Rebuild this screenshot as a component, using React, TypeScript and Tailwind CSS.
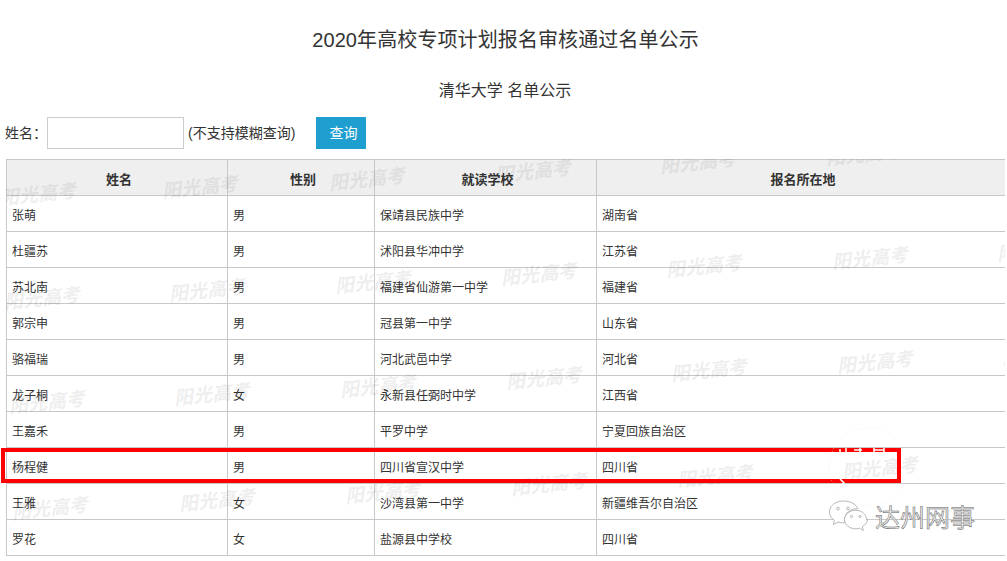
const font = '"Liberation Sans", "Noto Sans CJK SC", sans-serif';

const rows = [
  ['张萌', '男', '保靖县民族中学', '湖南省'],
  ['杜疆苏', '男', '沭阳县华冲中学', '江苏省'],
  ['苏北南', '男', '福建省仙游第一中学', '福建省'],
  ['郭宗申', '男', '冠县第一中学', '山东省'],
  ['骆福瑞', '男', '河北武邑中学', '河北省'],
  ['龙子桐', '女', '永新县任弼时中学', '江西省'],
  ['王嘉禾', '男', '平罗中学', '宁夏回族自治区'],
  ['杨程健', '男', '四川省宣汉中学', '四川省'],
  ['王雅', '女', '沙湾县第一中学', '新疆维吾尔自治区'],
  ['罗花', '女', '盐源县中学校', '四川省'],
];

// watermark origins inside the table box, the site tiles this as a table background
const marks = [
  [-6, 24], [156, 17], [323, 9], [489, 1], [654, -8], [820, -16], [985, -24],
  [-2, 128], [163, 120], [329, 112], [495, 104], [660, 96], [826, 88], [991, 80],
  [3, 232], [168, 224], [334, 216], [500, 208], [665, 200], [831, 192], [996, 184],
  [6, 338], [173, 330], [339, 322], [505, 314], [671, 306], [836, 298],
];

function WechatLogo() {
  return (
    <svg width="40" height="36" viewBox="0 0 40 36" fill="#fff" stroke="#999" strokeWidth="0.7">
      <path d="M15 1C7.5 1 1.500 5.800 1.500 12c0 3.400 1.900 6.300 4.800 8.300L5.300 24.500l4.700-2.500c1.700.5 3.300.8 5 .8 1 0 1.500 0 2.500-.2-.5-1.300-.7-2.300-.7-3.600 0-5.700 5.300-10.200 12-10.200h1C28.300 4 22.200 1 15 1z" />
      <path d="M38.500 19.500c0-5.200-5-9.200-10.800-9.200-6 0-11.200 4-11.200 9.200 0 5.300 5.200 9.300 11.200 9.300 1.300 0 2.500-.3 3.800-.6l3.800 2.300-1-3.700c3-2 5.200-4.800 5.200-7.300z" />
      <circle cx="10" cy="8.500" r="1.400" />
      <circle cx="20" cy="8.500" r="1.400" />
      <circle cx="23.500" cy="16.500" r="1.100" />
      <circle cx="32" cy="16.500" r="1.100" />
    </svg>
  );
}

// the pale round stamp that the account logo leaves over the red box
function Stamp() {
  return (
    <svg className="absolute left-[826px] top-[425px] pointer-events-none" width="84" height="84" viewBox="0 0 84 84" fill="none" stroke="#fff">
      <circle cx="42" cy="42" r="39" stroke="#e9e9e9" strokeWidth="0.6" strokeDasharray="1 2" />
      <path d="M14 24v4M20 23v5M28 25h8M34 23v5M48 23v5M48 25h10M58 23v5" strokeWidth="1.500" />
      <path d="M14 54l4 4-4 3" strokeWidth="1.500" />
    </svg>
  );
}

export default function App() {
  return (
    <div className="relative w-[1007px] h-[561px] overflow-hidden bg-white text-[#333]" style={{ fontFamily: font }}>
      <h1 className="pt-[27px] pl-[4px] h-[75px] text-center text-[20px] leading-[26px] tracking-[0.1px] font-normal">
        2020年高校专项计划报名审核通过名单公示
      </h1>
      <h2 className="h-[42px] pt-[4px] pl-[3px] text-center text-[16px] leading-[24px] font-normal">清华大学 名单公示</h2>

      <div className="flex items-center h-[32px] pl-[5px] text-[14px]">
        <span className="w-[42px]">姓名：</span>
        <input className="w-[137px] h-[32px] border border-[#ccc] bg-white" />
        <span className="ml-[4px] w-[128px] whitespace-nowrap">(不支持模糊查询)</span>
        <button className="w-[50px] h-[32px] pl-[5px] bg-[#1f9fd0] text-white text-[14px]">查询</button>
      </div>

      <div className="relative mt-[10px] ml-[6px] w-[999px] overflow-hidden">
        <table className="w-[999px] table-fixed border-collapse text-[12px]">
          <colgroup>
            <col className="w-[221px]" />
            <col className="w-[147px]" />
            <col className="w-[222px]" />
            <col className="w-[409px]" />
          </colgroup>
          <thead>
            <tr className="h-[36px] bg-[#efefef]">
              {['姓名', '性别', '就读学校', '报名所在地'].map((h) => (
                <th key={h} className="border border-[#c8c8c8] font-bold text-center text-[13px] pt-[5px] pb-0 pl-[4px] pr-0">
                  {h}
                </th>
              ))}
            </tr>
          </thead>
          <tbody>
            {rows.map((row, i) => (
              <tr key={i} className="h-[36px]">
                {row.map((cell, j) => (
                  <td key={j} className="border border-[#c8c8c8] pl-[5px] pt-[5px] pb-0">
                    {cell}
                  </td>
                ))}
              </tr>
            ))}
          </tbody>
        </table>

        {/* 水印 */}
        {marks.map(([x, y], i) => (
          <span
            key={i}
            className="absolute pointer-events-none whitespace-nowrap text-[19px] leading-[24px] font-black italic text-black/[0.07] -rotate-[6deg]"
            style={{ left: x, top: y, fontFamily: '"Liberation Serif", "Noto Sans CJK SC", serif' }}
          >
            阳光高考
          </span>
        ))}
      </div>

      <div className="absolute left-[1px] top-[448px] w-[900px] h-[35px] border-4 border-[#ff0000] pointer-events-none" />

      <Stamp />

      <div className="absolute left-[828px] top-[500px] flex items-center gap-[7px]">
        <WechatLogo />
        <span className="text-[25px] leading-[32px] text-[#e8e8e8] font-normal [-webkit-text-stroke:0.5px_#666]">达州网事</span>
      </div>
    </div>
  );
}
